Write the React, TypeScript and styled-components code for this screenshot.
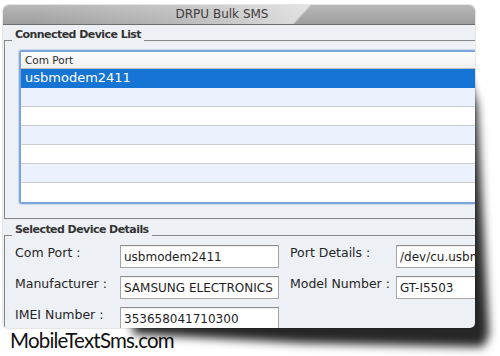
import React from "react";
import styled, { createGlobalStyle } from "styled-components";

const GlobalStyle = createGlobalStyle`
  html, body { margin: 0; padding: 0; background: #ffffff; }
  body {
    width: 500px; height: 356px; overflow: hidden;
    font-family: "DejaVu Sans", Verdana, sans-serif;
    color: #2b2b2b;
  }
  * { box-sizing: border-box; }
`;

const Page = styled.div`
  display: flex;
  flex-direction: column;
  align-items: flex-start;
  padding: 5px 0 0 3px;
`;

const Frame = styled.div`
  position: relative;
  width: 472px;
  height: 323px;
`;

const ShadowLayer = styled.div`
  position: absolute;
  inset: 0;
  filter: blur(5px);
  pointer-events: none;
  &::before {
    content: "";
    position: absolute;
    left: 0;
    top: 0;
    width: 500px;
    height: 352px;
    background: rgba(0, 0, 0, 0.85);
    clip-path: polygon(464px 70px, 474px 100px, 486px 330px, 480px 342px, 300px 338px, 130px 329px, 130px 318px);
  }
`;

const Window = styled.div`
  position: relative;
  width: 100%;
  height: 100%;
  display: flex;
  flex-direction: column;
  border-radius: 6px 6px 5px 5px;
  overflow: hidden;
  background: #edf0f5;
  box-shadow: 0 0 0 1px rgba(0, 0, 0, 0.1);
`;

const TitleBar = styled.div`
  flex: none;
  height: 20px;
  border-bottom: 1px solid #6e6e6e;
  background:
    linear-gradient(132deg, rgba(255,255,255,0) 8%, rgba(255,255,255,0.25) 38%, rgba(255,255,255,0.62) 62.6%, rgba(255,255,255,0) 63.2%),
    linear-gradient(#b8b8b8, #9e9e9e);
  display: flex;
  align-items: center;
  justify-content: center;
  padding-right: 34px;
  font-size: 12px;
  line-height: 19px;
  color: #3c3c3c;
`;

const Body = styled.div`
  flex: 1;
  min-height: 0;
  overflow: hidden;
  padding-left: 1px;
  display: flex;
  flex-direction: column;
`;

const Group = styled.section<{ $grow?: boolean; $gap?: number }>`
  width: 560px;
  display: flex;
  flex-direction: column;
  flex: ${(p) => (p.$grow ? "1 0 auto" : "none")};
  margin-top: ${(p) => p.$gap ?? 0}px;
`;

const GroupHeader = styled.div`
  display: flex;
  height: 16px;
`;

const HeaderLine = styled.div<{ $lead?: boolean }>`
  height: 16px;
  border-bottom: 1px solid #858585;
  ${(p) => (p.$lead ? "width: 8px; flex: none;" : "flex: 1;")}
`;

const Legend = styled.div`
  height: 16px;
  padding: 4px 3px 0;
  font-size: 11px;
  font-weight: bold;
  line-height: 12px;
  letter-spacing: -0.55px;
  color: #333333;
  white-space: nowrap;
`;

const GroupContent = styled.div<{ $pad: string; $grow?: boolean }>`
  border-left: 1px solid #858585;
  border-bottom: 1px solid #858585;
  padding: ${(p) => p.$pad};
  flex: ${(p) => (p.$grow ? "1" : "none")};
`;

const DeviceTable = styled.div`
  width: 530px;
  border: 2px solid #7ca5db;
  border-radius: 3px;
  background: #ffffff;
  box-shadow: 0 0 0 1px rgba(125, 166, 220, 0.3);
  overflow: hidden;
`;

const TableHeader = styled.div`
  height: 17px;
  border-bottom: 1px solid #bcbcbc;
  background: linear-gradient(#ffffff, #f0f0f0);
  font-size: 10.5px;
  line-height: 16px;
  padding-left: 4px;
  color: #2a2a2a;
`;

const Row = styled.div<{ $kind: "selected" | "odd" | "even" }>`
  height: 19px;
  border-bottom: 1px solid ${(p) => (p.$kind === "selected" ? "#1574d4" : "#c9cbd1")};
  background: ${(p) =>
    p.$kind === "selected" ? "#1574d4" : p.$kind === "odd" ? "#ebf2fd" : "#ffffff"};
  color: ${(p) => (p.$kind === "selected" ? "#ffffff" : "#222222")};
  font-size: 13px;
  line-height: 18px;
  padding-left: 4px;
  &:last-child { border-bottom: none; }
`;

const DetailsGrid = styled.div`
  display: grid;
  grid-template-columns: 105px 159px 117px 160px;
  row-gap: 8px;
  align-items: start;
`;

const Label = styled.div<{ $second?: boolean }>`
  font-size: 12.5px;
  line-height: 15px;
  color: #262626;
  white-space: nowrap;
  padding-left: ${(p) => (p.$second ? "11px" : "0")};
`;

const Field = styled.div`
  height: 23px;
  border: 1px solid #a5a5a5;
  border-top-color: #8e8e8e;
  background: #ffffff;
  box-shadow: inset 0 1px 1px rgba(0, 0, 0, 0.07);
  font-size: 12px;
  line-height: 19px;
  padding: 2px 3px 0;
  white-space: nowrap;
  overflow: hidden;
  color: #1e1e1e;
`;

const Logo = styled.div`
  font-family: Lato, "Open Sans", sans-serif;
  font-size: 20.5px;
  line-height: 24px;
  letter-spacing: -0.8px;
  color: #111111;
  padding-left: 7px;
`;

const rows: { text: string; kind: "selected" | "odd" | "even" }[] = [
  { text: "usbmodem2411", kind: "selected" },
  { text: "", kind: "odd" },
  { text: "", kind: "even" },
  { text: "", kind: "odd" },
  { text: "", kind: "even" },
  { text: "", kind: "odd" },
  { text: "", kind: "even" },
];

const details: [string, string, string, string][] = [
  ["Com Port :", "usbmodem2411", "Port Details :", "/dev/cu.usbmodem2411"],
  ["Manufacturer :", "SAMSUNG ELECTRONICS", "Model Number :", "GT-I5503"],
  ["IMEI Number :", "353658041710300", "", ""],
];

export default function App() {
  return (
    <>
      <GlobalStyle />
      <Page>
        <Frame>
          <ShadowLayer />
          <Window>
            <TitleBar>DRPU Bulk SMS</TitleBar>
            <Body>
              <Group>
                <GroupHeader>
                  <HeaderLine $lead />
                  <Legend>Connected Device List</Legend>
                  <HeaderLine />
                </GroupHeader>
                <GroupContent $pad="9px 0 14px 14px">
                  <DeviceTable>
                    <TableHeader>Com Port</TableHeader>
                    {rows.map((r, i) => (
                      <Row key={i} $kind={r.kind}>
                        {r.text}
                      </Row>
                    ))}
                  </DeviceTable>
                </GroupContent>
              </Group>
              <Group $grow $gap={1}>
                <GroupHeader>
                  <HeaderLine $lead />
                  <Legend>Selected Device Details</Legend>
                  <HeaderLine />
                </GroupHeader>
                <GroupContent $pad="9px 0 10px 10px" $grow>
                  <DetailsGrid>
                    {details.map(([l1, v1, l2, v2], i) => (
                      <React.Fragment key={i}>
                        <Label>{l1}</Label>
                        <Field>{v1}</Field>
                        {l2 ? (
                          <>
                            <Label $second>{l2}</Label>
                            <Field>{v2}</Field>
                          </>
                        ) : null}
                      </React.Fragment>
                    ))}
                  </DetailsGrid>
                </GroupContent>
              </Group>
            </Body>
          </Window>
        </Frame>
        <Logo>MobileTextSms.com</Logo>
      </Page>
    </>
  );
}
